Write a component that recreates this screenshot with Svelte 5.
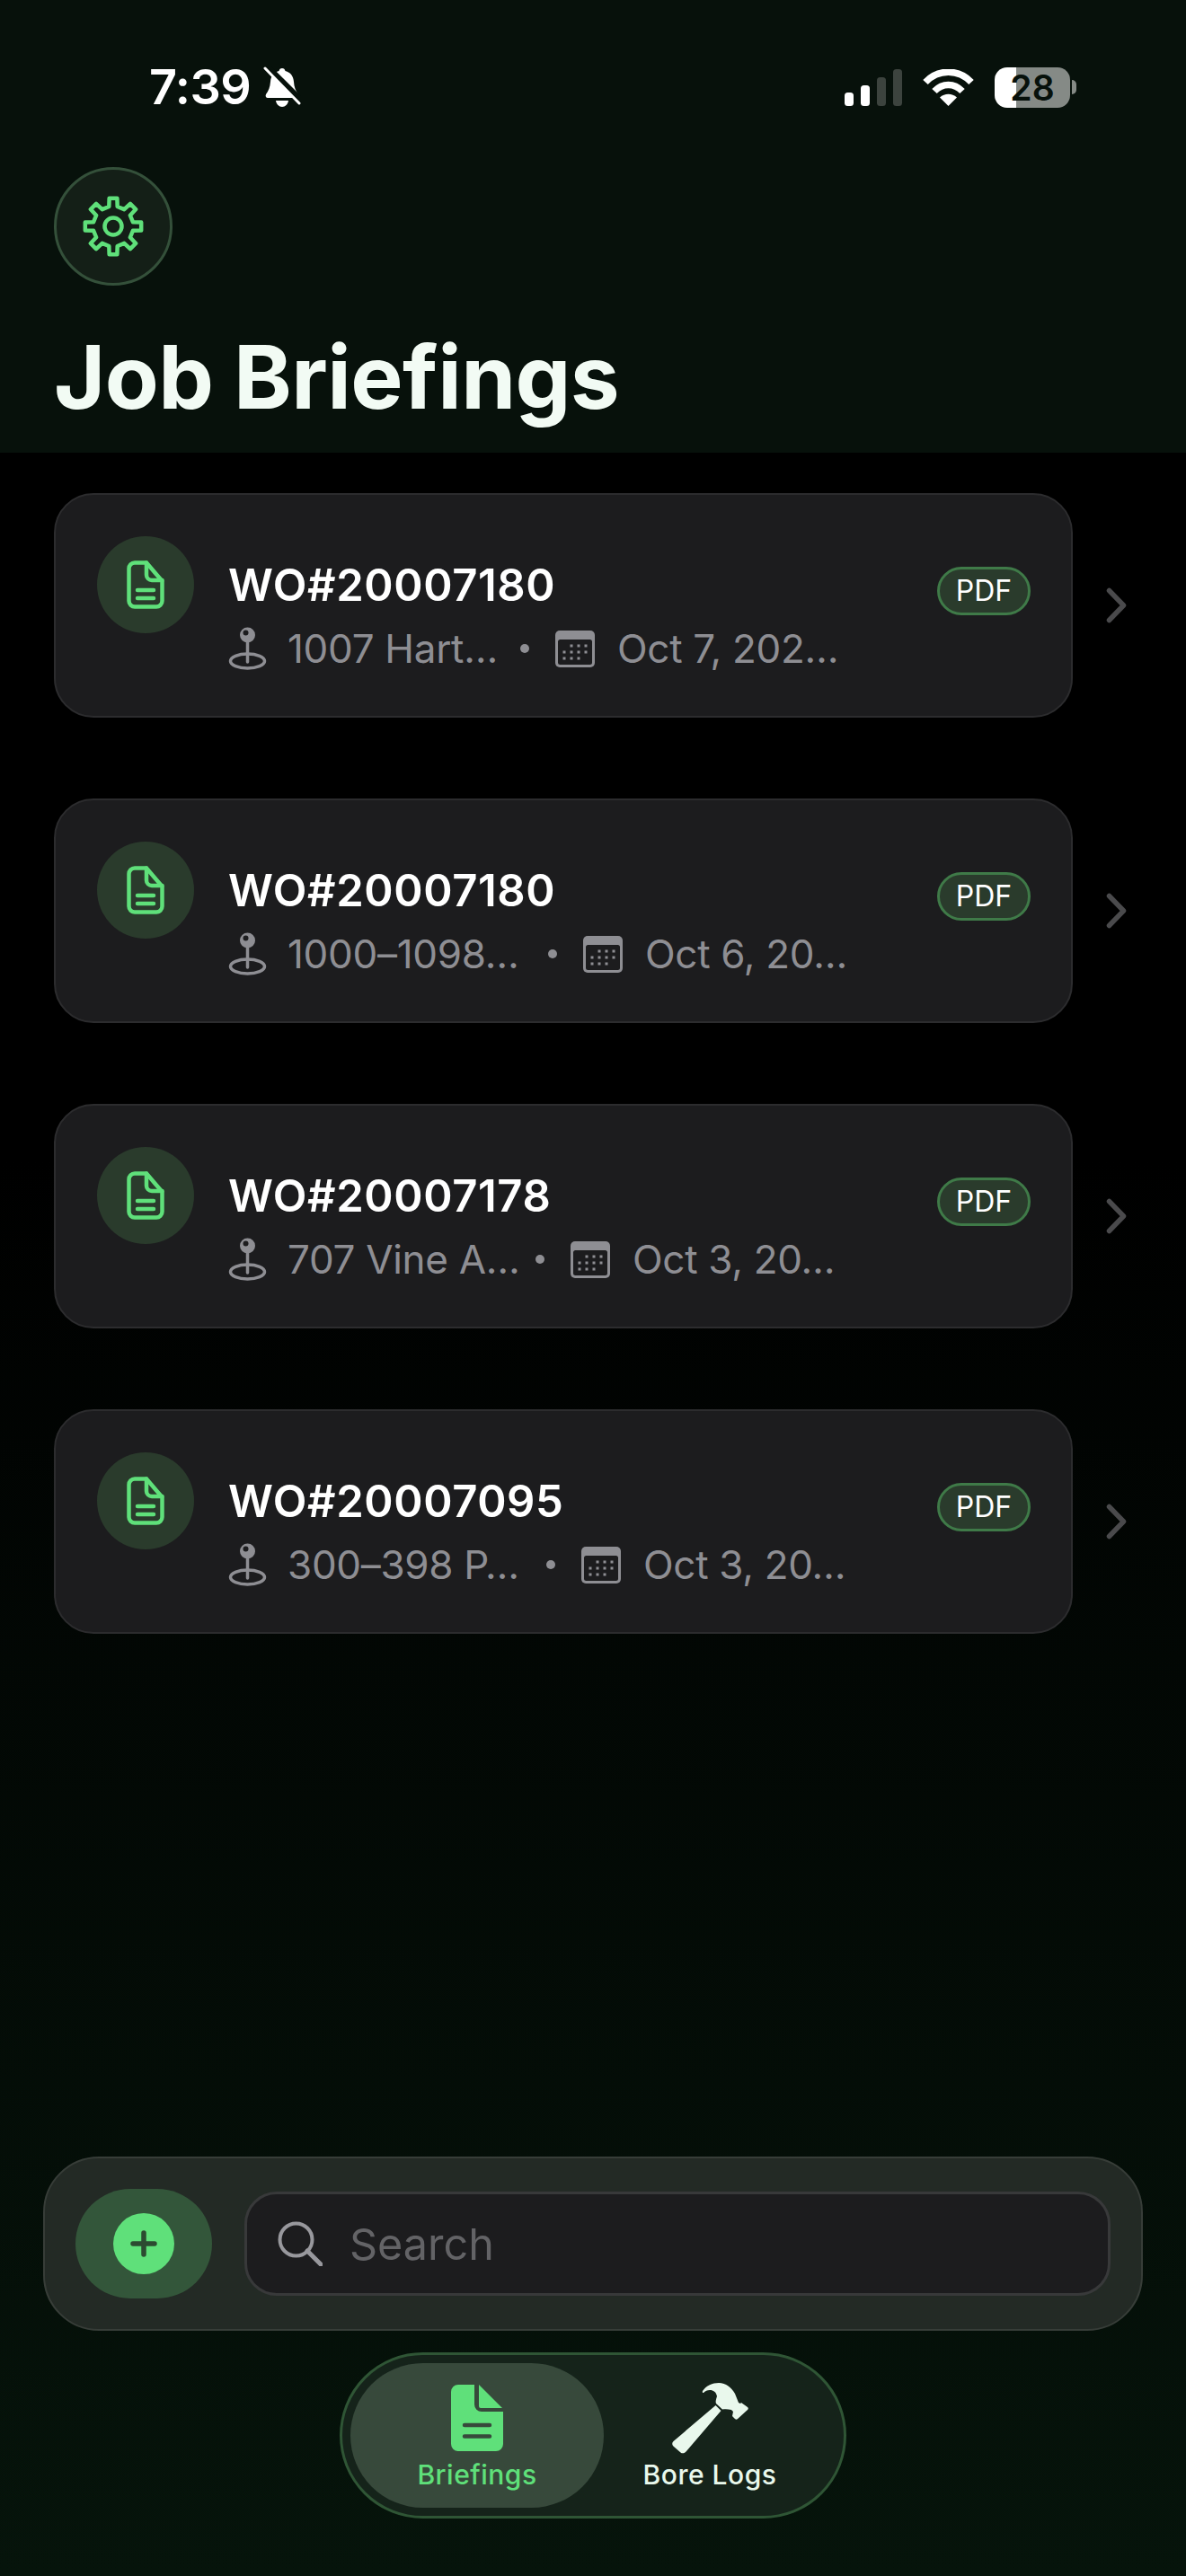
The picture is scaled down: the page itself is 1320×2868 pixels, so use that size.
<script lang="ts">
	const briefings = [
		{ title: 'WO#20007180', place: '1007 Hart…', placeWidth: 231, date: 'Oct 7, 202…' },
		{ title: 'WO#20007180', place: '1000–1098…', placeWidth: 262, date: 'Oct 6, 20…' },
		{ title: 'WO#20007178', place: '707 Vine A…', placeWidth: 248, date: 'Oct 3, 20…' },
		{ title: 'WO#20007095', place: '300–398 P…', placeWidth: 260, date: 'Oct 3, 20…' }
	];
	const calendarDots = [
		[18, 17], [26, 17], [34, 17],
		[10, 24], [18, 24], [26, 24], [34, 24],
		[10, 31], [18, 31], [26, 31]
	];

	// 8 teeth: base and tip corners of each tooth around the centre
	function gearPath() {
		const pt = (deg: number, r: number) => {
			const a = ((deg - 90) * Math.PI) / 180;
			return `${(34 + r * Math.cos(a)).toFixed(2)} ${(34 + r * Math.sin(a)).toFixed(2)}`;
		};
		const parts: string[] = [];
		for (let i = 0; i < 8; i++) {
			const c = i * 45;
			parts.push(pt(c - 12, 22.5), pt(c - 8, 31.5), pt(c + 8, 31.5), pt(c + 12, 22.5));
		}
		return 'M' + parts.join('L') + 'Z';
	}
	const gear = gearPath();
</script>

<div class="screen">
	<header class="top">
		<div class="status">
			<div class="status-left">
				<span class="time">7:39</span>
				<svg class="bell" viewBox="0 0 42 46">
					<path fill="#fff" d="M21 2c2 0 3 1 3.500 3 6 1.500 9 6 9.500 12 .4 6 2 10 5 14 1 2 0 4-2 4H5c-2 0-3-2-2-4 3-4 4.500-8 5-14 .5-6 3.500-10.500 9.500-12C18 3 19 2 21 2z" />
					<path fill="#fff" d="M14 38h14c-.5 4-3.500 7-7 7s-6.500-3-7-7z" />
					<path stroke="#07110b" stroke-width="7" d="M3 -1 43 39" />
					<path stroke="#fff" stroke-width="3" stroke-linecap="round" d="M2 2 40 41" />
				</svg>
			</div>
			<div class="status-right">
				<div class="signal">
					<span class="bar b1"></span>
					<span class="bar b2"></span>
					<span class="bar b3"></span>
					<span class="bar b4"></span>
				</div>
				<svg class="wifi" viewBox="0 0 57 41">
					<path fill="none" stroke="#fff" stroke-width="7.500" d="M3 14.500C17-.5 40-.5 54 14.500" />
					<path fill="none" stroke="#fff" stroke-width="7.500" d="M13 24.500c9-9.500 22-9.500 31 0" />
					<path fill="#fff" d="M19 31.500c5.500-5 13.500-5 19 0L28.500 41z" />
				</svg>
				<div class="battery">
					<span class="battery-body">28</span>
					<span class="battery-nub"></span>
				</div>
			</div>
		</div>

		<button class="gear">
			<svg viewBox="0 0 68 68" fill="none" stroke="#5fe07a" stroke-width="4.500" stroke-linejoin="round">
				<path d={gear} />
				<circle cx="34" cy="34" r="9.500" />
			</svg>
		</button>
		<h1>Job Briefings</h1>
	</header>

	<main class="list">
		{#each briefings as item}
			<div class="row">
				<article class="card">
					<div class="doc-circle">
						<svg class="doc" viewBox="0 0 42 54" fill="none" stroke="#5fe07a" stroke-width="4.500" stroke-linecap="round" stroke-linejoin="round">
							<path d="M9 2.500h13L39.500 23v22a6.500 6.500 0 0 1-6.500 6.500H9A6.500 6.500 0 0 1 2.500 45V9A6.500 6.500 0 0 1 9 2.500z" />
							<path d="M22 2.500V16a6 6 0 0 0 6 6h11.500" />
							<path d="M12 33h18M12 42h18" />
						</svg>
					</div>
					<div class="info">
						<div class="title">{item.title}</div>
						<div class="meta">
							<svg class="pin" viewBox="0 0 43 48">
								<ellipse cx="21.500" cy="38" rx="19" ry="8" fill="none" stroke="#8e8e93" stroke-width="3.500" />
								<path d="M21.500 14v25" stroke="#8e8e93" stroke-width="3.500" stroke-linecap="round" />
								<circle cx="21.500" cy="9" r="8.500" fill="#8e8e93" />
								<circle cx="19.500" cy="6.500" r="3" fill="#1c1c1e" />
							</svg>
							<span class="place" style="width: {item.placeWidth}px">{item.place}</span>
							<span class="sep"></span>
							<svg class="cal" viewBox="0 0 44 41">
								<rect width="44" height="41" rx="5" fill="#8e8e93" />
								<rect x="3" y="10" width="38" height="28" rx="2.500" fill="#1c1c1e" />
								{#each calendarDots as [x, y]}
									<rect x={x - 1.500} y={y - 1.500} width="3" height="3" fill="#8e8e93" />
								{/each}
							</svg>
							<span class="date">{item.date}</span>
						</div>
					</div>
					<span class="pdf">PDF</span>
				</article>
				<svg class="chevron" viewBox="0 0 23 40" fill="none" stroke="#4a4a4c" stroke-width="5.500" stroke-linecap="round" stroke-linejoin="round">
					<path d="M3.500 3.500 19.500 20 3.500 36.500" />
				</svg>
			</div>
		{/each}
	</main>

	<div class="composer">
		<button class="add">
			<span class="add-dot">
				<svg viewBox="0 0 32 32" stroke="#2c4a31" stroke-width="5.500" stroke-linecap="round">
					<path d="M16 4v24M4 16h24" />
				</svg>
			</span>
		</button>
		<div class="search">
			<svg viewBox="0 0 50 50" fill="none" stroke="#98989d" stroke-linecap="round">
				<circle cx="20.500" cy="20.500" r="18" stroke-width="4" />
				<path d="M33 33l15 15" stroke-width="5" />
			</svg>
			<span>Search</span>
		</div>
	</div>

	<nav class="tabs">
		<div class="tab active">
			<svg class="tab-doc" viewBox="0 0 58 74">
				<path fill="#5fe07a" d="M8 0h18v22a8 8 0 0 0 8 8h24v36a8 8 0 0 1-8 8H8a8 8 0 0 1-8-8V8a8 8 0 0 1 8-8z" />
				<path fill="#5fe07a" d="M31 0 57 26H33a2 2 0 0 1-2-2z" />
				<path stroke="#37493b" stroke-width="4.500" stroke-linecap="round" d="M15 45h28M15 57.500h28" />
			</svg>
			<span>Briefings</span>
		</div>
		<div class="tab bore">
			<svg class="hammer" viewBox="0 0 85 79">
				<path fill="#e9f8ec" d="M48.500 25 54.500 31 16 76c-2 2.500-4.500 3-6.500 1.500L2 71c-2-2-2.500-4-.5-6z" />
				<path fill="#e9f8ec" d="M34 9c4-6 11-9 18-9 8 0 14 5 18 12l4 10 2 1 1-1 7 5c1 1 1 2 0 3L73 40c-1 1-2 1-3 0l-3-3 1-5-2-2c-4-1-7-1-10-.5L49 23c-1-2 0-5 1-8-1-5-4-7-8-7-3 0-5 1-7 3-1 .5-1.500-1-1-2z" />
			</svg>
			<span>Bore Logs</span>
		</div>
	</nav>
</div>

<style>
	:global(body) {
		background: #000;
	}

	.screen {
		width: 1320px;
		height: 2868px;
		display: flex;
		flex-direction: column;
		font-family: Inter, 'Noto Sans', sans-serif;
		color: #fff;
		background: linear-gradient(180deg, #000 0%, #000 45%, #06140b 100%);
		overflow: hidden;
	}

	.top {
		height: 504px;
		flex: none;
		box-sizing: border-box;
		padding: 74px 60px 0;
		background: #07110b;
	}

	.status {
		display: flex;
		justify-content: space-between;
		align-items: center;
		height: 46px;
		padding-left: 106px;
		padding-right: 62px;
		box-sizing: border-box;
	}

	.status-left {
		display: flex;
		align-items: center;
		gap: 14px;
	}

	.time {
		font-size: 54px;
		font-weight: 600;
		line-height: 46px;
		letter-spacing: -0.5px;
	}

	.bell {
		width: 42px;
		height: 46px;
	}

	.status-right {
		display: flex;
		align-items: center;
		gap: 23px;
	}

	.signal {
		display: flex;
		align-items: flex-end;
		gap: 7.500px;
		height: 41px;
	}

	.bar {
		width: 10.500px;
		border-radius: 3.500px;
		background: #fff;
	}

	.b1 {
		height: 15px;
	}

	.b2 {
		height: 23px;
	}

	.b3 {
		height: 32px;
		background: #3c433e;
	}

	.b4 {
		height: 41px;
		background: #3c433e;
	}

	.wifi {
		width: 57px;
		height: 41px;
	}

	.battery {
		display: flex;
		align-items: center;
		gap: 2px;
	}

	.battery-body {
		width: 84px;
		height: 45px;
		border-radius: 14px;
		background: linear-gradient(90deg, #fff 0 24px, #858a86 24px);
		color: #07110b;
		font-size: 39px;
		font-weight: 600;
		line-height: 45px;
		text-align: center;
	}

	.battery-nub {
		width: 5px;
		height: 16px;
		border-radius: 0 5px 5px 0;
		background: #858a86;
	}

	.gear {
		display: flex;
		align-items: center;
		justify-content: center;
		box-sizing: border-box;
		width: 132px;
		height: 132px;
		margin-top: 66px;
		padding: 0;
		border: 3px solid #34503a;
		border-radius: 50%;
		background: #141f17;
	}

	.gear svg {
		width: 68px;
		height: 68px;
		overflow: visible;
	}

	h1 {
		margin: 42px 0 0;
		font-size: 98px;
		font-weight: 700;
		line-height: 120px;
		letter-spacing: -0.6px;
		color: #f2fbf4;
	}

	.list {
		flex: 1;
		display: flex;
		flex-direction: column;
		gap: 90px;
		padding: 45px 60px 0;
	}

	.row {
		display: flex;
		align-items: center;
		gap: 37px;
	}

	.card {
		display: flex;
		align-items: flex-start;
		box-sizing: border-box;
		width: 1134px;
		height: 250px;
		padding: 46px 45px 0 46px;
		border: 2px solid #2c2c2e;
		border-radius: 44px;
		background: #1c1c1e;
	}

	.doc-circle {
		flex: none;
		display: flex;
		align-items: center;
		justify-content: center;
		width: 108px;
		height: 108px;
		border-radius: 50%;
		background: #2a3b2c;
	}

	.doc {
		width: 42px;
		height: 54px;
	}

	.info {
		flex: 1;
		min-width: 0;
		margin: 26px 0 0 38px;
	}

	.title {
		font-size: 49px;
		font-weight: 600;
		line-height: 58px;
		letter-spacing: 0.6px;
	}

	.meta {
		display: flex;
		align-items: center;
		height: 50px;
		margin-top: 16px;
		font-size: 44px;
		color: #8e8e93;
		letter-spacing: -0.3px;
		white-space: nowrap;
	}

	.pin {
		flex: none;
		width: 43px;
		height: 48px;
		margin-right: 23px;
	}

	.place {
		flex: none;
	}

	.sep {
		flex: none;
		width: 10px;
		height: 10px;
		margin: 0 29px 0 28px;
		border-radius: 50%;
		background: #8e8e93;
	}

	.cal {
		flex: none;
		width: 44px;
		height: 41px;
		margin-right: 25px;
	}

	.pdf {
		flex: none;
		box-sizing: border-box;
		width: 104px;
		height: 54px;
		margin-top: 34px;
		border: 3px solid #3f7a48;
		border-radius: 27px;
		background: #2a3b2c;
		font-size: 32px;
		line-height: 48px;
		text-align: center;
	}

	.chevron {
		width: 23px;
		height: 40px;
	}

	.composer {
		flex: none;
		display: flex;
		align-items: center;
		gap: 36px;
		box-sizing: border-box;
		height: 194px;
		margin: 0 48px;
		padding: 0 34px;
		border: 2px solid #373d38;
		border-radius: 62px;
		background: #232a25;
	}

	.add {
		flex: none;
		display: flex;
		align-items: center;
		justify-content: center;
		width: 152px;
		height: 122px;
		padding: 0;
		border: none;
		border-radius: 61px;
		background: #33563a;
	}

	.add-dot {
		display: flex;
		align-items: center;
		justify-content: center;
		width: 68px;
		height: 68px;
		border-radius: 50%;
		background: #5fe07a;
	}

	.add-dot svg {
		width: 32px;
		height: 32px;
	}

	.search {
		flex: 1;
		display: flex;
		align-items: center;
		gap: 30px;
		box-sizing: border-box;
		height: 116px;
		padding-left: 34px;
		border: 3px solid #38393a;
		border-radius: 36px;
		background: #1c1c1e;
		color: #636366;
		font-size: 48.500px;
	}

	.search svg {
		width: 50px;
		height: 50px;
	}

	.tabs {
		flex: none;
		display: flex;
		align-self: center;
		box-sizing: border-box;
		width: 564px;
		height: 185px;
		margin: 24px 0 64px;
		padding: 9px;
		border: 3px solid #2f5535;
		border-radius: 93px;
		background: #15231a;
	}

	.tab {
		flex: 1;
		display: flex;
		flex-direction: column;
		align-items: center;
		justify-content: flex-end;
		padding-bottom: 17px;
		border-radius: 81px;
		font-size: 30px;
		font-weight: 500;
		line-height: 40px;
		letter-spacing: 0.5px;
		color: #e9f8ec;
	}

	.bore {
		padding-right: 22px;
	}

	.active {
		flex: none;
		width: 282px;
		background: #37493b;
		color: #5fe07a;
	}

	.tab-doc {
		width: 58px;
		height: 74px;
		margin-bottom: 6px;
	}

	.hammer {
		width: 85px;
		height: 79px;
		margin-bottom: 3px;
	}
</style>
